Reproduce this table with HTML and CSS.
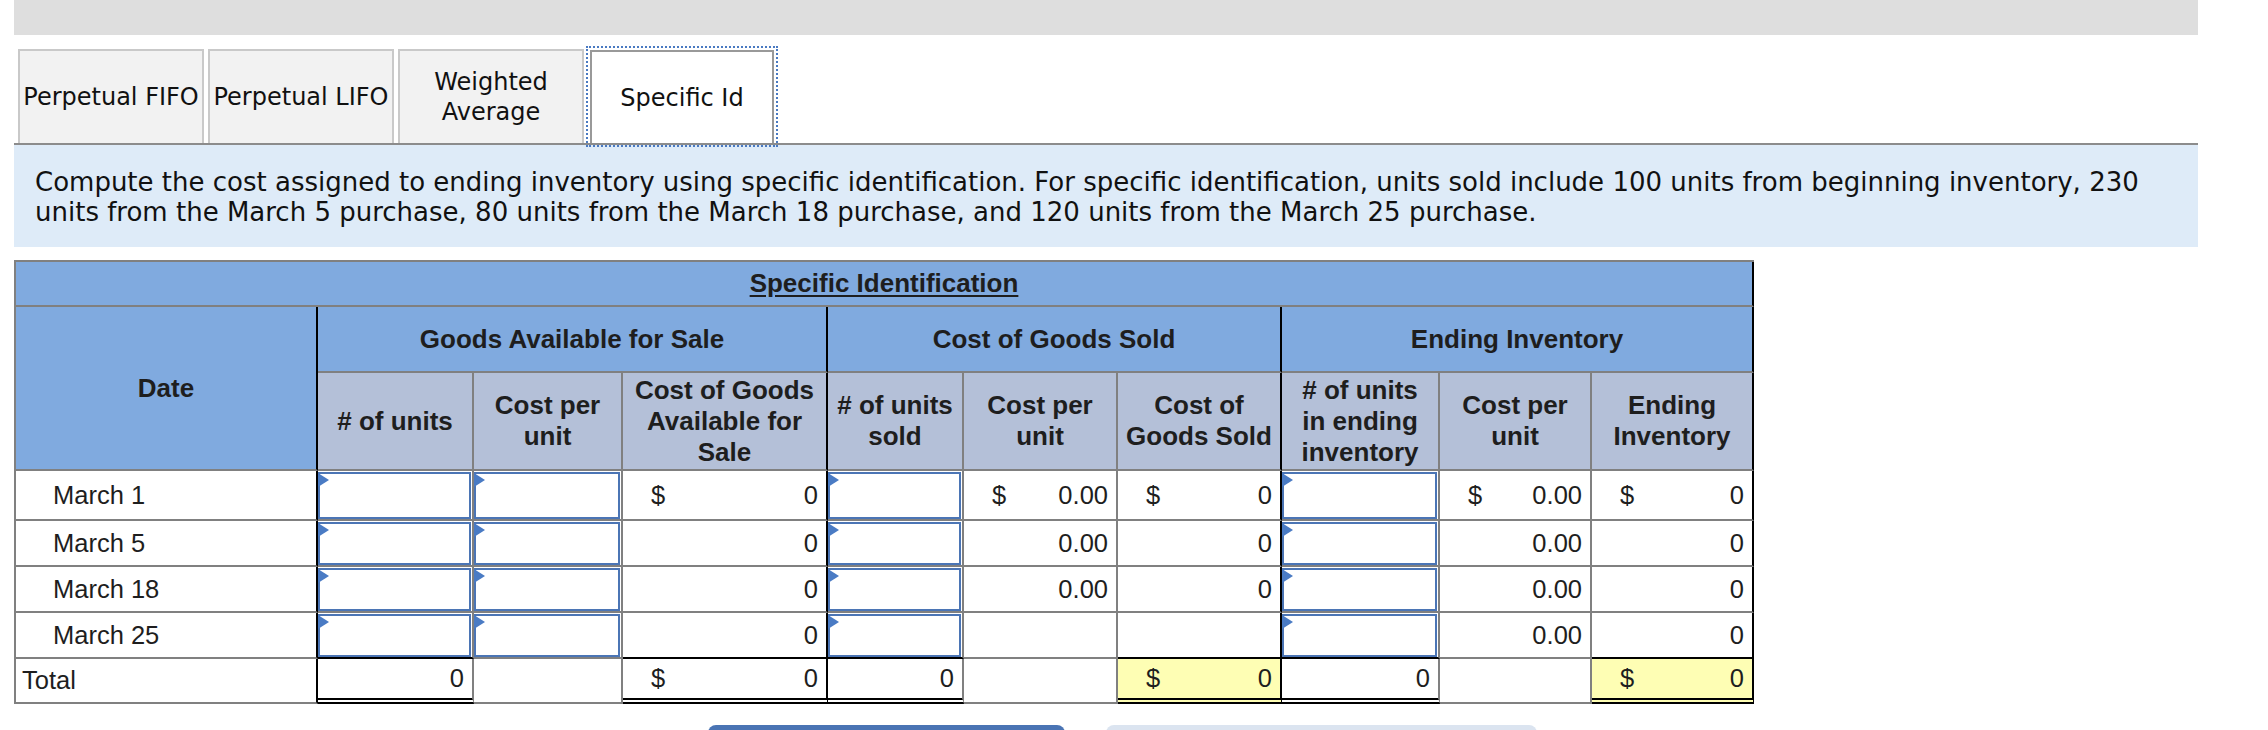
FILE: index.html
```html
<!DOCTYPE html>
<html lang="en">
<head>
<meta charset="utf-8">
<title>Specific Identification</title>
<link rel="stylesheet" href="styles.css">
</head>
<body>
<div class="page">
  <div class="topbar"></div>

  <div class="tabs">
    <div class="tab">Perpetual FIFO</div>
    <div class="tab">Perpetual LIFO</div>
    <div class="tab">Weighted<br>Average</div>
    <div class="tab active">Specific Id</div>
  </div>

  <div class="instr">Compute the cost assigned to ending inventory using specific identification. For specific identification, units sold include 100 units from beginning inventory, 230 units from the March 5 purchase, 80 units from the March 18 purchase, and 120 units from the March 25 purchase.</div>

  <div class="grid">
    <div class="c k title"><span>Specific Identification</span></div>

    <div class="c k hdr date">Date</div>
    <div class="c k hdr grp">Goods Available for Sale</div>
    <div class="c k hdr grp">Cost of Goods Sold</div>
    <div class="c k hdr grp">Ending Inventory</div>

    <div class="c sub"># of units</div>
    <div class="c sub">Cost per<br>unit</div>
    <div class="c k sub">Cost of Goods<br>Available for<br>Sale</div>
    <div class="c sub"># of units<br>sold</div>
    <div class="c sub">Cost per<br>unit</div>
    <div class="c k sub">Cost of<br>Goods Sold</div>
    <div class="c sub"># of units<br>in ending<br>inventory</div>
    <div class="c sub">Cost per<br>unit</div>
    <div class="c k sub">Ending<br>Inventory</div>

    <!-- March 1 -->
    <div class="c k lbl">March 1</div>
    <div class="c in"><div class="box"></div></div>
    <div class="c in"><div class="box"></div></div>
    <div class="c k val"><span>$</span><span>0</span></div>
    <div class="c in"><div class="box"></div></div>
    <div class="c val"><span>$</span><span>0.00</span></div>
    <div class="c k val"><span>$</span><span>0</span></div>
    <div class="c in"><div class="box"></div></div>
    <div class="c val"><span>$</span><span>0.00</span></div>
    <div class="c k val"><span>$</span><span>0</span></div>

    <!-- March 5 -->
    <div class="c k lbl">March 5</div>
    <div class="c in"><div class="box"></div></div>
    <div class="c in"><div class="box"></div></div>
    <div class="c k num">0</div>
    <div class="c in"><div class="box"></div></div>
    <div class="c num">0.00</div>
    <div class="c k num">0</div>
    <div class="c in"><div class="box"></div></div>
    <div class="c num">0.00</div>
    <div class="c k num">0</div>

    <!-- March 18 -->
    <div class="c k lbl">March 18</div>
    <div class="c in"><div class="box"></div></div>
    <div class="c in"><div class="box"></div></div>
    <div class="c k num">0</div>
    <div class="c in"><div class="box"></div></div>
    <div class="c num">0.00</div>
    <div class="c k num">0</div>
    <div class="c in"><div class="box"></div></div>
    <div class="c num">0.00</div>
    <div class="c k num">0</div>

    <!-- March 25 -->
    <div class="c k lbl">March 25</div>
    <div class="c in tb"><div class="box"></div></div>
    <div class="c in"><div class="box"></div></div>
    <div class="c k num tb">0</div>
    <div class="c in tb"><div class="box"></div></div>
    <div class="c num"></div>
    <div class="c k num tb"></div>
    <div class="c in tb"><div class="box"></div></div>
    <div class="c num">0.00</div>
    <div class="c k num tb">0</div>

    <!-- Total -->
    <div class="c k lbl total">Total</div>
    <div class="c num dbl">0</div>
    <div class="c num"></div>
    <div class="c k val dbl"><span>$</span><span>0</span></div>
    <div class="c num dbl">0</div>
    <div class="c num"></div>
    <div class="c k val dbl yel"><span>$</span><span>0</span></div>
    <div class="c num dbl">0</div>
    <div class="c num"></div>
    <div class="c k val dbl yel"><span>$</span><span>0</span></div>
  </div>

  <div class="buttons">
    <div class="btn primary"></div>
    <div class="btn light"></div>
  </div>
</div>
</body>
</html>
```

FILE: styles.css
```css
html, body {
  margin: 0;
  padding: 0;
  background: #ffffff;
}

.page {
  padding-left: 14px;
  width: 2184px;
  color: #111111;
}

.topbar {
  height: 35px;
  background: #dedede;
}

/* ---------- tabs ---------- */
.tabs {
  display: flex;
  align-items: flex-end;
  padding-top: 14px;
  padding-left: 4px;
  border-bottom: 2px solid #8c8c8c;
  height: 94px;
}

.tab {
  box-sizing: border-box;
  width: 186px;
  height: 94px;
  margin-right: 4px;
  background: #f2f2f2;
  border: 2px solid #c9c9c9;
  border-bottom: none;
  display: flex;
  align-items: center;
  justify-content: center;
  text-align: center;
  font-family: "DejaVu Sans", Verdana, sans-serif;
  font-size: 24px;
  line-height: 30px;
  color: #111111;
  white-space: nowrap;
}

.tab.active {
  width: 184px;
  height: 93px;
  margin-left: 2px;
  background: #ffffff;
  border-color: #999999;
  outline: 2px dotted #4a7ac2;
  outline-offset: 2px;
}

/* ---------- instructions ---------- */
.instr {
  background: #deebf8;
  padding: 22px 8px 20px 21px;
  font-family: "DejaVu Sans", Verdana, sans-serif;
  font-size: 26px;
  line-height: 30px;
  color: #111111;
}

/* ---------- grid table ---------- */
.grid {
  margin-top: 13px;
  display: grid;
  width: max-content;
  grid-template-columns: 302px 156px 149px 205px 136px 154px 164px 158px 152px 162px;
  grid-template-rows: 45px 66px 98px 50px 46px 46px 46px 45px;
  border-top: 2px solid #808080;
  border-left: 2px solid #808080;
  font-family: "Liberation Sans", Arial, sans-serif;
  font-size: 25.5px;
  color: #1e1e1e;
}

.c {
  box-sizing: border-box;
  border-right: 2px solid #808080;
  border-bottom: 2px solid #808080;
  background: #ffffff;
  display: flex;
  align-items: center;
  min-width: 0;
}

.c.k {
  border-right-color: #000000;
}

.title {
  grid-column: 1 / -1;
  justify-content: center;
  background: #80aadf;
  font-weight: bold;
  font-size: 26px;
}

.title span {
  text-decoration: underline;
  text-underline-offset: 3px;
}

.hdr {
  background: #80aadf;
  justify-content: center;
  font-weight: bold;
  font-size: 26px;
}

.date {
  grid-row: 2 / 4;
  grid-column: 1;
}

.grp {
  grid-column: span 3;
}

.sub {
  background: #b4c0d8;
  justify-content: center;
  text-align: center;
  font-weight: bold;
  font-size: 26px;
  line-height: 31px;
  white-space: nowrap;
}

.lbl {
  padding-left: 37px;
}

.lbl.total {
  padding-left: 6px;
}

.in {
  padding: 1px 1px 0 0;
  align-items: stretch;
}

.box {
  position: relative;
  flex: 1;
  box-sizing: border-box;
  border: 2px solid #4b75b5;
  background: #ffffff;
}

.box::before {
  content: "";
  position: absolute;
  top: -1px;
  left: -2px;
  width: 0;
  height: 0;
  border-left: 11px solid #4a7bc4;
  border-top: 7px solid transparent;
  border-bottom: 7px solid transparent;
}

.num {
  justify-content: flex-end;
  padding-right: 8px;
}

.val {
  justify-content: space-between;
  padding-left: 28px;
  padding-right: 8px;
}

.tb {
  border-bottom-color: #000000;
}

.dbl {
  border-bottom: 6px double #000000;
}

.yel {
  background: #fefeb4;
}

/* ---------- buttons ---------- */
.buttons {
  display: flex;
  gap: 41px;
  margin-top: 21px;
  padding-left: 694px;
}

.btn {
  height: 44px;
  border-radius: 8px;
}

.btn.primary {
  width: 357px;
  background: #4a74b4;
}

.btn.light {
  width: 431px;
  background: #dbe4f0;
}
```
